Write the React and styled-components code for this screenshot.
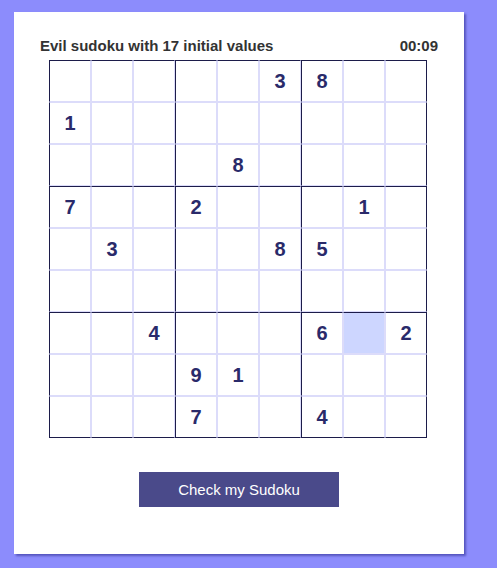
import React from 'react';
import styled, { createGlobalStyle } from 'styled-components';

const GlobalStyle = createGlobalStyle`
  body {
    margin: 0;
    background: #8c8cfc;
    font-family: "Liberation Sans", Arial, sans-serif;
  }
`;

const Page = styled.div`
  min-height: 568px;
  padding: 12px 0 0 14px;
  box-sizing: border-box;
`;

const Card = styled.div`
  width: 450px;
  height: 542px;
  background: #fff;
  box-shadow: 2px 2px 2px rgba(40, 40, 140, 0.55);
  padding: 26px 26px 0;
  box-sizing: border-box;
  display: flex;
  flex-direction: column;
  align-items: center;
`;

const Header = styled.div`
  width: 100%;
  display: flex;
  justify-content: space-between;
  font-size: 15px;
  line-height: 16px;
  font-weight: bold;
  color: #333;
  margin-bottom: 6px;
`;

const Board = styled.div`
  display: grid;
  grid-template-columns: repeat(9, 42px);
  grid-template-rows: repeat(9, 42px);
  margin-right: 2px;
`;

const Cell = styled.div`
  box-sizing: border-box;
  border: 1px solid #dcdcfa;
  border-left-color: ${(p) => (p.$col % 3 === 0 ? '#1c1c4a' : '#dcdcfa')};
  border-top-color: ${(p) => (p.$row % 3 === 0 ? '#1c1c4a' : '#dcdcfa')};
  border-right-color: ${(p) => (p.$col === 8 ? '#1c1c4a' : '#dcdcfa')};
  border-bottom-color: ${(p) => (p.$row === 8 ? '#1c1c4a' : '#dcdcfa')};
  background: ${(p) => (p.$selected ? '#cdd6ff' : '#fff')};
  display: flex;
  align-items: center;
  justify-content: center;
  font-size: 20px;
  font-weight: bold;
  color: #2a2a6a;
`;

const CheckButton = styled.button`
  margin-top: 34px;
  width: 200px;
  height: 35px;
  border: none;
  background: #4a4a8a;
  color: #fff;
  font-family: "Liberation Sans", Arial, sans-serif;
  font-size: 15px;
  cursor: pointer;
`;

const puzzle = [
  '.....38..',
  '1........',
  '....8....',
  '7..2...1.',
  '.3...85..',
  '.........',
  '..4...6.2',
  '...91....',
  '...7..4..',
];

const selected = { row: 6, col: 7 };

export default function App() {
  return (
    <>
      <GlobalStyle />
      <Page>
        <Card>
          <Header>
            <span>Evil sudoku with 17 initial values</span>
            <span>00:09</span>
          </Header>
          <Board>
            {puzzle.map((line, r) =>
              line.split('').map((ch, c) => (
                <Cell
                  key={r + '-' + c}
                  $row={r}
                  $col={c}
                  $selected={r === selected.row && c === selected.col}
                >
                  {ch === '.' ? '' : ch}
                </Cell>
              ))
            )}
          </Board>
          <CheckButton>Check my Sudoku</CheckButton>
        </Card>
      </Page>
    </>
  );
}
